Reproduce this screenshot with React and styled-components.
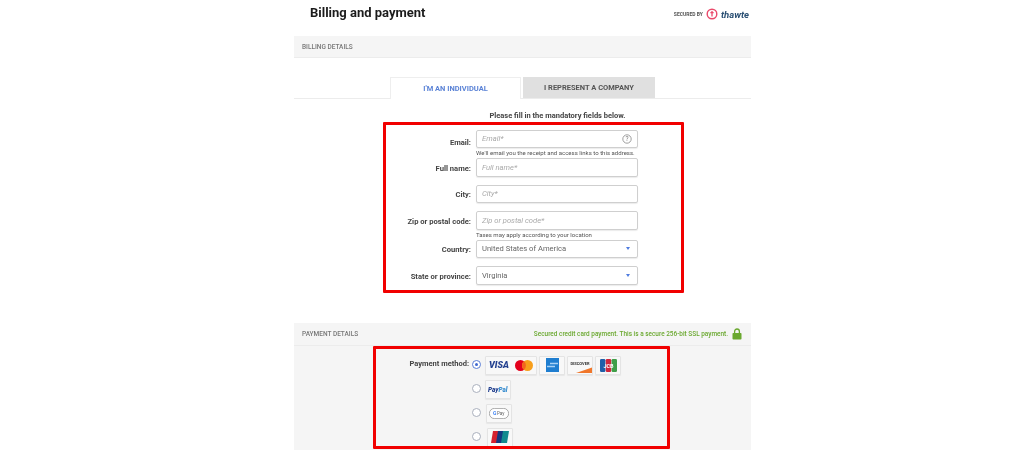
import React from "react";
import styled, { createGlobalStyle } from "styled-components";

const GlobalStyle = createGlobalStyle`
  html, body {
    margin: 0;
    padding: 0;
    height: 450px;
    overflow: hidden;
    background: #fff;
    font-family: Roboto, "Liberation Sans", sans-serif;
  }
`;

const Page = styled.div`
  position: relative;
  width: 1024px;
  height: 450px;
  overflow: hidden;
  display: flex;
  justify-content: center;
  background: #fff;
`;

const Column = styled.div`
  width: 457px;
  margin-left: 21px;
  display: flex;
  flex-direction: column;
  filter: blur(0.3px);
  & > * {
    flex-shrink: 0;
  }
`;

const TopRow = styled.div`
  height: 36px;
  display: flex;
  justify-content: space-between;
  align-items: flex-start;
  padding: 4px 2px 0 16px;
  box-sizing: border-box;
`;

const Title = styled.h1`
  margin: 0;
  font-size: 13px;
  line-height: 18px;
  font-weight: 700;
  color: #1c1c1c;
`;

const Seal = styled.div`
  display: flex;
  align-items: center;
  gap: 3px;
  margin-top: 4px;
  height: 12px;
`;

const SealText = styled.span`
  font-size: 5px;
  font-weight: 700;
  color: #555;
`;

const SealName = styled.span`
  font-size: 9.5px;
  font-weight: 700;
  font-style: italic;
  color: #2a4f73;
`;

const SectionBar = styled.div`
  height: 22px;
  box-sizing: border-box;
  padding: 0 8px;
  display: flex;
  align-items: center;
  justify-content: space-between;
  background: #f5f5f5;
  border-bottom: 1px solid #ececec;
  font-size: 6.5px;
  font-weight: 500;
  color: #777;
`;

const Tabs = styled.div`
  margin-top: 19px;
  height: 21px;
  padding-left: 96px;
  display: flex;
  gap: 2px;
  border-bottom: 1px solid #ececec;
`;

const Tab = styled.div`
  width: ${(p) => (p.$active ? 131 : 132)}px;
  height: ${(p) => (p.$active ? 22 : 21)}px;
  box-sizing: border-box;
  display: flex;
  align-items: center;
  justify-content: center;
  font-size: 7.5px;
  font-weight: 700;
  color: ${(p) => (p.$active ? "#5b83d6" : "#555")};
  background: ${(p) => (p.$active ? "#fff" : "#e0e0e0")};
  border: ${(p) => (p.$active ? "1px solid #eee" : "none")};
  border-bottom: none;
`;

const Intro = styled.p`
  margin: 12px 0 0 132px;
  width: 263px;
  text-align: center;
  font-size: 7.5px;
  line-height: 10px;
  font-weight: 700;
  color: #444;
`;

const Form = styled.div`
  margin-top: 8.5px;
  display: flex;
  flex-direction: column;
`;

const Row = styled.div`
  display: grid;
  grid-template-columns: 177px 162px;
  column-gap: 5px;
  margin-bottom: ${(p) => (p.$tight ? 1 : 8)}px;
`;

const Label = styled.label`
  justify-self: end;
  align-self: center;
  margin-top: ${(p) => (p.$low ? 8 : 2)}px;
  font-size: 7.6px;
  font-weight: 700;
  color: #444;
`;

const Field = styled.div`
  height: 18.5px;
  box-sizing: border-box;
  padding: 0 5px;
  display: flex;
  align-items: center;
  justify-content: space-between;
  background: #fff;
  border: 1px solid #cfcfcf;
  border-radius: 2px;
  box-shadow: 0 1px 1px rgba(0, 0, 0, 0.08);
  font-size: 7.6px;
  color: ${(p) => (p.$filled ? "#666" : "#aaa")};
  font-style: ${(p) => (p.$filled ? "normal" : "italic")};
`;

const Hint = styled.div`
  grid-column: 2;
  margin-top: 1px;
  white-space: nowrap;
  font-size: 6.05px;
  line-height: 8px;
  color: #555;
`;

const Caret = styled.span`
  width: 0;
  height: 0;
  margin-right: 2px;
  border-left: 2px solid transparent;
  border-right: 2px solid transparent;
  border-top: 3px solid #4f7ce0;
`;

const PaymentPanel = styled.div`
  margin-top: 30px;
  flex: 1;
  background: #f5f5f5;
`;

const PaymentBar = styled(SectionBar)`
  height: 23px;
  padding-right: 9px;
`;

const SecureNote = styled.span`
  display: flex;
  align-items: center;
  gap: 4px;
  font-size: 6.45px;
  font-weight: 500;
  color: #6aa82f;
`;

const Methods = styled.div`
  margin-top: 10px;
  display: flex;
  flex-direction: column;
  gap: 5px;
`;

const MethodRow = styled.div`
  display: flex;
  align-items: center;
  height: 19px;
`;

const MethodLabel = styled.span`
  width: 175px;
  margin-bottom: 4px;
  text-align: right;
  font-size: 7.5px;
  font-weight: 700;
  color: #444;
`;

const Radio = styled.span`
  width: 9px;
  height: 9px;
  margin: 0 4px 2px 3px;
  box-sizing: border-box;
  border-radius: 50%;
  display: flex;
  align-items: center;
  justify-content: center;
  background: #fff;
  border: 1px solid ${(p) => (p.$on ? "#5b7fd6" : "#aab0bd")};
  &::after {
    content: "";
    width: 3px;
    height: 3px;
    border-radius: 50%;
    background: ${(p) => (p.$on ? "#3f68d0" : "transparent")};
  }
`;

const Tiles = styled.div`
  display: flex;
  gap: 2px;
  margin-left: ${(p) => p.$shift || 0}px;
`;

const Tile = styled.div`
  width: ${(p) => p.$w}px;
  height: 19px;
  box-sizing: border-box;
  display: flex;
  align-items: center;
  justify-content: center;
  gap: 6px;
  background: #f8f8f8;
  border: 1px solid #e4e4e4;
  border-radius: 1px;
  box-shadow: 0 1px 1px rgba(0, 0, 0, 0.06);
`;

const Visa = styled.span`
  font-size: 9px;
  font-weight: 900;
  font-style: italic;
  color: #22408f;
`;

const Marks = styled.div`
  position: absolute;
  inset: 0;
  pointer-events: none;
`;

const Mark = styled.div`
  position: absolute;
  left: ${(p) => p.$x}px;
  top: ${(p) => p.$y}px;
  width: ${(p) => p.$w}px;
  height: ${(p) => p.$h}px;
  box-sizing: border-box;
  border: 3px solid #f10000;
  border-radius: 1px;
`;

const rows = [
  { label: "Email:", value: "Email*", help: true, hint: "We'll email you the receipt and access links to this address." },
  { label: "Full name:", value: "Full name*" },
  { label: "City:", value: "City*" },
  { label: "Zip or postal code:", value: "Zip or postal code*", hint: "Taxes may apply according to your location" },
  { label: "Country:", value: "United States of America", select: true },
  { label: "State or province:", value: "Virginia", select: true },
];

function HelpIcon() {
  return (
    <svg width="10" height="10" viewBox="0 0 10 10">
      <circle cx="5" cy="5" r="4.2" fill="none" stroke="#888" strokeWidth="0.8" />
      <text x="5" y="7.2" textAnchor="middle" fontSize="6.5" fontStyle="normal" fontFamily="Roboto, sans-serif" fill="#777">?</text>
    </svg>
  );
}

function ThawteMark() {
  return (
    <svg width="12" height="12" viewBox="0 0 11 11">
      <circle cx="5.5" cy="5.5" r="4.4" fill="none" stroke="#ea4a6b" strokeWidth="1.3" />
      <path d="M5.5 2.8v5M4 4.2h3" stroke="#ea4a6b" strokeWidth="1.2" fill="none" />
    </svg>
  );
}

function Lock() {
  return (
    <svg width="10" height="12" viewBox="0 0 10 12">
      <path d="M2.6 5V3.4a2.4 2.4 0 0 1 4.8 0V5" fill="none" stroke="#6aa82f" strokeWidth="1.3" />
      <rect x="0.5" y="5" width="9" height="6.5" rx="0.8" fill="#6aa82f" />
    </svg>
  );
}

function Mastercard() {
  return (
    <svg width="18" height="11" viewBox="0 0 18 11">
      <circle cx="5.5" cy="5.5" r="5.5" fill="#e3001b" />
      <circle cx="12.5" cy="5.5" r="5.5" fill="#f79e1b" />
      <path d="M9 1.3a5.5 5.5 0 0 1 0 8.4a5.5 5.5 0 0 1 0-8.4z" fill="#f2641f" />
    </svg>
  );
}

function Amex() {
  return (
    <svg width="13" height="14" viewBox="0 0 13 14">
      <rect width="13" height="14" fill="#1f7ed0" />
      <path d="M4 5.5h8M1 8.5h8" stroke="#a9d2f5" strokeWidth="1.4" />
    </svg>
  );
}

function Discover() {
  return (
    <svg width="24" height="15" viewBox="0 0 24 15">
      <text x="12" y="7" textAnchor="middle" fontSize="4" fontWeight="700" fontFamily="Roboto, sans-serif" fill="#333">DISCOVER</text>
      <path d="M24 9.5V15H8z" fill="#f0772b" />
    </svg>
  );
}

function Jcb() {
  return (
    <svg width="17" height="13" viewBox="0 0 17 13">
      <rect width="5.4" height="13" rx="1.2" fill="#1f5fa8" />
      <rect x="5.8" width="5.4" height="13" rx="1.2" fill="#d0263c" />
      <rect x="11.6" width="5.4" height="13" rx="1.2" fill="#3f9e48" />
      <text x="8.5" y="8.5" textAnchor="middle" fontSize="5.5" fontWeight="700" fontFamily="Roboto, sans-serif" fill="#fff">JCB</text>
    </svg>
  );
}

function Paypal() {
  return (
    <svg width="20" height="8" viewBox="0 0 20 8">
      <text x="0" y="6.5" fontSize="6.4" fontWeight="900" fontStyle="italic" fontFamily="Roboto, sans-serif" fill="#22408f">Pay<tspan fill="#3b8fd0">Pal</tspan></text>
    </svg>
  );
}

function Gpay() {
  return (
    <svg width="20" height="11" viewBox="0 0 20 11">
      <rect x="0.4" y="0.4" width="19.2" height="10.2" rx="5" fill="#fff" stroke="#888" strokeWidth="0.7" />
      <text x="4" y="7.4" fontSize="5" fontWeight="700" fontFamily="Roboto, sans-serif" fill="#4285f4">G</text>
      <text x="8" y="7.4" fontSize="4.6" fontFamily="Roboto, sans-serif" fill="#666">Pay</text>
    </svg>
  );
}

function UnionPay() {
  return (
    <svg width="18" height="12" viewBox="0 0 18 12">
      <path d="M2 0h6L6 12H0z" fill="#d6202f" />
      <path d="M7 0h6l-2 12H5z" fill="#16387f" />
      <path d="M12 0h6l-2 12h-6z" fill="#128a8e" />
    </svg>
  );
}

function App() {
  return (
    <Page>
      <GlobalStyle />
      <Column>
        <TopRow>
          <Title>Billing and payment</Title>
          <Seal>
            <SealText>SECURED BY</SealText>
            <ThawteMark />
            <SealName>thawte</SealName>
          </Seal>
        </TopRow>
        <SectionBar>BILLING DETAILS</SectionBar>
        <Tabs>
          <Tab $active>I'M AN INDIVIDUAL</Tab>
          <Tab>I REPRESENT A COMPANY</Tab>
        </Tabs>
        <Intro>Please fill in the mandatory fields below.</Intro>
        <Form>
          {rows.map((r) => (
            <Row key={r.label} $tight={!!r.hint}>
              <Label $low={r.help}>{r.label}</Label>
              <Field $filled={r.select}>
                {r.value}
                {r.help && <HelpIcon />}
                {r.select && <Caret />}
              </Field>
              {r.hint && <Hint>{r.hint}</Hint>}
            </Row>
          ))}
        </Form>
        <PaymentPanel>
          <PaymentBar>
            PAYMENT DETAILS
            <SecureNote>
              Secured credit card payment. This is a secure 256-bit SSL payment.
              <Lock />
            </SecureNote>
          </PaymentBar>
          <Methods>
            <MethodRow>
              <MethodLabel>Payment method:</MethodLabel>
              <Radio $on />
              <Tiles>
                <Tile $w={52}><Visa>VISA</Visa><Mastercard /></Tile>
                <Tile $w={26}><Amex /></Tile>
                <Tile $w={26}><Discover /></Tile>
                <Tile $w={26}><Jcb /></Tile>
              </Tiles>
            </MethodRow>
            <MethodRow>
              <MethodLabel />
              <Radio />
              <Tiles><Tile $w={26}><Paypal /></Tile></Tiles>
            </MethodRow>
            <MethodRow>
              <MethodLabel />
              <Radio />
              <Tiles $shift={1}><Tile $w={26}><Gpay /></Tile></Tiles>
            </MethodRow>
            <MethodRow>
              <MethodLabel />
              <Radio />
              <Tiles $shift={2}><Tile $w={26}><UnionPay /></Tile></Tiles>
            </MethodRow>
          </Methods>
        </PaymentPanel>
      </Column>
      <Marks>
        <Mark $x={383} $y={122} $w={301} $h={171} />
        <Mark $x={373} $y={346} $w={297} $h={103} />
      </Marks>
    </Page>
  );
}

export default App;
